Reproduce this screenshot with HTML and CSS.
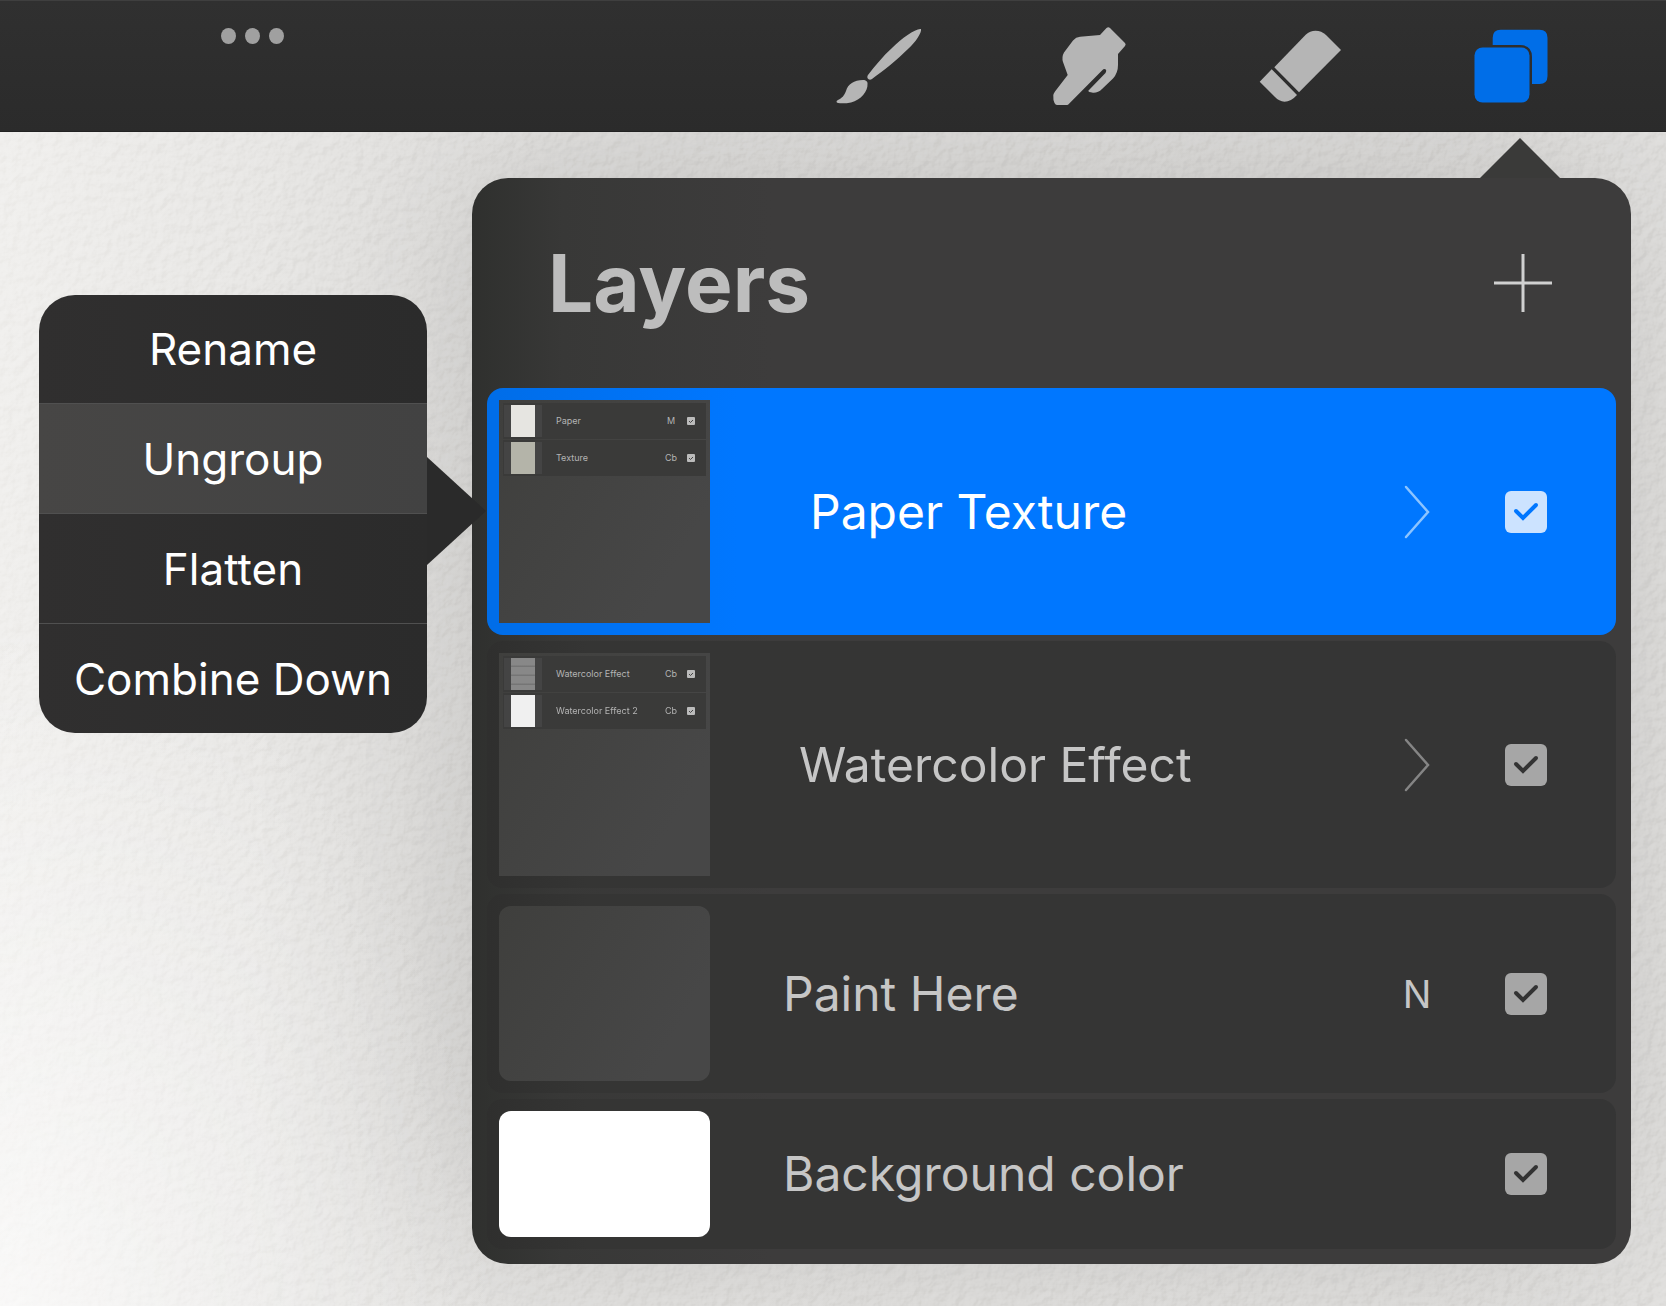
FILE: index.html
```html
<!DOCTYPE html>
<html lang="en">
<head>
<meta charset="utf-8">
<meta name="viewport" content="width=device-width, initial-scale=1">
<title>Layers</title>
<link rel="stylesheet" href="styles.css">
</head>
<body>
<svg class="paper" aria-hidden="true">
  <filter id="grain" x="0" y="0" width="100%" height="100%" color-interpolation-filters="sRGB">
    <feTurbulence type="fractalNoise" baseFrequency="0.1" numOctaves="3" seed="8" result="noise"/>
    <feDiffuseLighting in="noise" surfaceScale="3" diffuseConstant="1" lighting-color="#ffffff">
      <feDistantLight azimuth="225" elevation="30"/>
    </feDiffuseLighting>
  </filter>
  <rect width="100%" height="100%" filter="url(#grain)"/>
</svg>

<header class="toolbar">
  <button class="more" aria-label="More"><i class="dot"></i><i class="dot"></i><i class="dot"></i></button>
  <nav class="tools" aria-label="Tools">
    <button class="tool" aria-label="Paint">
      <svg viewBox="0 0 84 84"><path d="M84 5C85 8 79 18 71 25C60 36 46 47 35 55C32 57 29 54 31 51C38 42 46 32 55 24C65 14 79 4 84 5Z"/><path d="M26 56C29 56 31 58 30.500 60C31 67 24 76 14 78.500C9 79.500 4 79.500 1 79C-1 78.500-1 77 1 76C5 74 7 72 9 67C11 60 17 56 26 56Z"/></svg>
    </button>
    <button class="tool" aria-label="Smudge">
      <svg viewBox="0 0 84 84"><path d="M58.500 4Q60.300 2.600 62 4L77 19Q78.300 20.500 77 22L70 30V41Q70 49 65 54.500L54 65Q50 69 45 68.700Q40 68 40.300 66.700L57.500 49Q59 46 57.300 45.300Q56 44.500 54 46.500L20.300 80.500Q19.500 81 18 81H9Q7.500 81 6.500 79Q5 76 5.300 71Q5.500 69.500 7 67.500L19.700 51L15 38Q13.500 33 16 28.500L25 16.500Q28 13 32 12.700L52 11Z"/></svg>
    </button>
    <button class="tool" aria-label="Erase">
      <svg viewBox="0 0 84 84"><path d="M46.700 10.700Q51 6.700 56.500 6.700Q62.500 6.700 67 11L82 26L40 68.300L15.300 43.300Z"/><path d="M12.700 45.300L38 71Q32 77.700 25.500 77.700Q20 77.300 16 73L.7 57.700Z"/></svg>
    </button>
    <button class="tool tool-active" aria-label="Layers" aria-expanded="true">
      <svg viewBox="0 0 84 84"><rect x="4.500" y="23.500" width="55" height="55" rx="8"/><path d="M22.700 21V13.700Q22.700 5.700 30.700 5.700H69.500Q77.500 5.700 77.500 13.700V52Q77.500 60 69.500 60H62V33Q62 21 50 21Z"/></svg>
    </button>
  </nav>
</header>

<main class="canvas">
  <div class="menu" role="menu">
    <button class="menu-item" role="menuitem">Rename</button>
    <button class="menu-item menu-item-on" role="menuitem">Ungroup</button>
    <button class="menu-item" role="menuitem">Flatten</button>
    <button class="menu-item" role="menuitem">Combine Down</button>
  </div>

  <section class="panel">
    <div class="panel-head">
      <h1 class="title">Layers</h1>
      <button class="add" aria-label="Add layer"><svg viewBox="0 0 58 58"><path d="M29 0V58M0 29H58"/></svg></button>
    </div>
    <ul class="layers">
      <li class="layer layer-selected">
        <div class="thumb thumb-group">
          <div class="mini"><span class="mini-art"><i class="swatch swatch-paper"></i></span><span class="mini-name">Paper</span><span class="mini-mode">M</span><svg class="mini-check" viewBox="0 0 8 8"><rect width="8" height="8" rx="1"/><path d="M2 4L3.500 5.500L6 3"/></svg></div>
          <div class="mini"><span class="mini-art"><i class="swatch swatch-texture"></i></span><span class="mini-name">Texture</span><span class="mini-mode">Cb</span><svg class="mini-check" viewBox="0 0 8 8"><rect width="8" height="8" rx="1"/><path d="M2 4L3.500 5.500L6 3"/></svg></div>
        </div>
        <label class="name name-group-selected" for="l1">Paper Texture</label>
        <span class="mode"><svg class="chevron" viewBox="0 0 26 54"><path d="M2 2L24 27L2 52"/></svg></span>
        <span class="check"><input type="checkbox" id="l1" checked><svg viewBox="0 0 42 42"><path d="M11 20L18 27L31 14"/></svg></span>
      </li>
      <li class="layer">
        <div class="thumb thumb-group">
          <div class="mini"><span class="mini-art"><i class="swatch swatch-wash"></i></span><span class="mini-name">Watercolor Effect</span><span class="mini-mode">Cb</span><svg class="mini-check" viewBox="0 0 8 8"><rect width="8" height="8" rx="1"/><path d="M2 4L3.500 5.500L6 3"/></svg></div>
          <div class="mini"><span class="mini-art"><i class="swatch swatch-white"></i></span><span class="mini-name">Watercolor Effect 2</span><span class="mini-mode">Cb</span><svg class="mini-check" viewBox="0 0 8 8"><rect width="8" height="8" rx="1"/><path d="M2 4L3.500 5.500L6 3"/></svg></div>
        </div>
        <label class="name name-group" for="l2">Watercolor Effect</label>
        <span class="mode"><svg class="chevron" viewBox="0 0 26 54"><path d="M2 2L24 27L2 52"/></svg></span>
        <span class="check"><input type="checkbox" id="l2" checked><svg viewBox="0 0 42 42"><path d="M11 20L18 27L31 14"/></svg></span>
      </li>
      <li class="layer">
        <div class="thumb thumb-empty"></div>
        <label class="name" for="l3">Paint Here</label>
        <span class="mode">N</span>
        <span class="check"><input type="checkbox" id="l3" checked><svg viewBox="0 0 42 42"><path d="M11 20L18 27L31 14"/></svg></span>
      </li>
      <li class="layer">
        <div class="thumb thumb-color"></div>
        <label class="name" for="l4">Background color</label>
        <span class="mode"></span>
        <span class="check"><input type="checkbox" id="l4" checked><svg viewBox="0 0 42 42"><path d="M11 20L18 27L31 14"/></svg></span>
      </li>
    </ul>
  </section>
</main>
</body>
</html>
```
FILE: styles.css
```css
* { box-sizing: border-box; }

body {
  margin: 0;
  min-height: 100vh;
  position: relative;
  overflow-x: hidden;
  background:
    radial-gradient(ellipse 500px 700px at 0 100%, rgba(255, 255, 255, .6), rgba(255, 255, 255, 0)),
    linear-gradient(90deg, #f0efed 0, #e6e5e3 300px, #e2e1df 100%);
  font-family: Inter, "Liberation Sans", sans-serif;
  color: #c6c6c6;
}

button {
  margin: 0;
  padding: 0;
  border: 0;
  background: none;
  color: inherit;
  font: inherit;
  cursor: pointer;
}

/* Paper grain behind everything */
.paper {
  position: absolute;
  inset: 0;
  width: 100%;
  height: 100%;
  opacity: .3;
  mix-blend-mode: soft-light;
}

/* Toolbar */
.toolbar {
  position: relative;
  z-index: 2;
  display: flex;
  justify-content: space-between;
  align-items: flex-start;
  height: 132px;
  padding: 24px 112px 0 221px;
  background: linear-gradient(#303030, #2b2b2b);
  box-shadow: inset 0 1px #3f3f3f, inset 0 -1px #222;
}
.more { display: flex; gap: 9px; padding-top: 4px; }
.dot { width: 15px; height: 16px; border-radius: 50%; background: #a0a0a0; }
.tools { display: flex; gap: 127px; }
.tool { width: 84px; height: 84px; }
.tool svg { display: block; overflow: visible; fill: #b5b5b5; }
.tool-active svg { fill: #006ee8; }

/* Canvas */
.canvas {
  position: relative;
  display: flex;
  align-items: flex-start;
  gap: 45px;
  padding: 46px 35px 42px 39px;
}

/* Context menu */
.menu {
  position: relative;
  z-index: 3;
  flex: 0 0 388px;
  margin-top: 117px;
  border-radius: 36px;
  background: linear-gradient(90deg, #302f2f, #2b2b2b);
}
.menu::after {
  content: "";
  position: absolute;
  left: 100%;
  top: 162px;
  width: 59px;
  height: 108px;
  background: #2a2a2a;
  clip-path: polygon(0 0, 100% 50%, 0 100%);
}
.menu-item {
  display: block;
  width: 100%;
  height: 108px;
  color: #fff;
  font-size: 44px;
  line-height: 56px;
}
.menu-item + .menu-item { height: 110px; border-top: 1px solid #505050; }
.menu-item-on { background: linear-gradient(90deg, #474645, #424242); }

/* Layers panel */
.panel {
  position: relative;
  flex: 1;
  min-width: 0;
  padding: 0 15px 15px;
  border-radius: 36px;
  background: linear-gradient(90deg, #2f302e 0, #383837 90px, #3d3c3c 300px);
  box-shadow: -20px -20px 200px rgba(0, 0, 0, .16);
}
.panel::before {
  content: "";
  position: absolute;
  right: 71px;
  bottom: 100%;
  width: 80px;
  height: 40px;
  background: #3a3a39;
  clip-path: polygon(50% 0, 100% 100%, 0 100%);
}
.panel-head {
  display: flex;
  justify-content: space-between;
  align-items: center;
  height: 210px;
  padding: 0 64px 0 61px;
}
.title { margin: 0; color: #bdbdbd; font-size: 80px; line-height: 100px; font-weight: 700; }
.add { width: 58px; height: 58px; }
.add svg { display: block; fill: none; stroke: #d0d0d0; stroke-width: 3; }

.layers {
  display: grid;
  gap: 6px;
  margin: 0;
  padding: 0;
  list-style: none;
}
.layer {
  display: grid;
  grid-template-columns: 211px 1fr 50px 42px;
  align-items: center;
  padding: 12px 69px 12px 12px;
  border-radius: 16px;
  background: linear-gradient(90deg, #2f2f2e 0, #353534 100px, #353535 100%);
}
.layer-selected {
  background: linear-gradient(90deg, #006de8 0, #0077ff 250px);
  color: #fff;
}

.thumb { background: linear-gradient(120deg, #3f3f3d, #474747 80%); }
.thumb-group { height: 223px; padding: 3px 4px; }
.thumb-empty { height: 175px; border-radius: 12px; }
.thumb-color { height: 126px; border-radius: 12px; background: #fff; }

.mini {
  display: flex;
  align-items: center;
  height: 36px;
  margin-bottom: 1px;
  padding-right: 11px;
  background: #3a3a39;
  color: #b4b4b4;
  font-size: 9px;
  line-height: 12px;
}
.mini-art {
  display: flex;
  justify-content: center;
  width: 38px;
  margin: 0 14px 0 1px;
  background: #444;
}
.swatch { width: 24px; height: 32px; }
.swatch-paper { background: #e6e5e1; }
.swatch-texture { background: #b4b4a9; }
.swatch-wash { background: repeating-linear-gradient(#888 0 7px, #757575 8px 9px); }
.swatch-white { background: #f0f0f0; }
.mini-name { flex: 1; white-space: nowrap; }
.mini-mode { width: 16px; margin-right: 8px; text-align: center; }
.mini-check { width: 8px; height: 8px; fill: #bbb; }
.mini-check path { fill: none; stroke: #444; }

.name {
  padding-left: 73px;
  font-size: 48px;
  line-height: 60px;
  white-space: nowrap;
}
.name-group { padding-left: 89px; }
.name-group-selected { padding-left: 100px; }

.mode {
  display: flex;
  justify-content: center;
  width: 50px;
  margin-left: -63px;
  font-size: 38px;
  line-height: 48px;
}
.chevron { width: 26px; height: 54px; fill: none; stroke: #858585; stroke-width: 2.5; stroke-linecap: round; }
.layer-selected .chevron { stroke: #8cc4ff; }

.check { display: grid; width: 42px; height: 42px; }
.check input {
  grid-area: 1 / 1;
  width: 42px;
  height: 42px;
  margin: 0;
  appearance: none;
  border-radius: 6px;
  background: #a6a6a6;
}
.check svg {
  grid-area: 1 / 1;
  fill: none;
  stroke: #333;
  stroke-width: 4;
  stroke-linecap: round;
  pointer-events: none;
}
.layer-selected .check input { background: #cce3ff; }
.layer-selected .check svg { stroke: #0077ff; }
```
